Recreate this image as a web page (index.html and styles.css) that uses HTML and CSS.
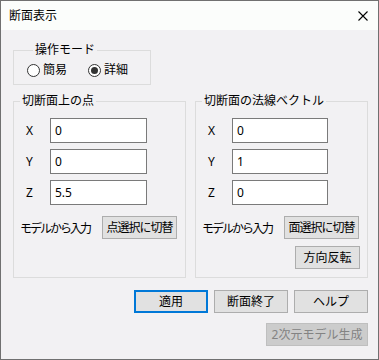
FILE: index.html
```html
<!DOCTYPE html>
<html lang="ja">
<head>
    <meta charset="UTF-8">
    <title>断面表示</title>
    <link rel="stylesheet" href="styles.css">
</head>
<body>
    <div class="window">
        <div class="titlebar">
            <span class="title">断面表示</span>
            <svg class="close" width="12" height="12" viewBox="0 0 12 12">
                <path d="M1.5 1.5 L10.5 10.5 M10.5 1.5 L1.5 10.5" stroke="#000" stroke-width="1.1" fill="none"/>
            </svg>
        </div>

        <div class="content">
            <fieldset class="mode">
                <legend>操作モード</legend>
                <div class="radio-row">
                    <label class="radio"><span class="dot"></span>簡易</label>
                    <label class="radio checked"><span class="dot"></span>詳細</label>
                </div>
            </fieldset>

            <div class="groups">
                <fieldset class="group">
                    <legend>切断面上の点</legend>
                    <div class="coord"><span class="axis">X</span><input type="text" value="0"></div>
                    <div class="coord"><span class="axis">Y</span><input type="text" value="0"></div>
                    <div class="coord"><span class="axis">Z</span><input type="text" value="5.5"></div>
                    <div class="model-row">
                        <span class="model-label">モデルから入力</span>
                        <button class="btn pick-btn">点選択に切替</button>
                    </div>
                </fieldset>

                <fieldset class="group">
                    <legend>切断面の法線ベクトル</legend>
                    <div class="coord"><span class="axis">X</span><input type="text" value="0"></div>
                    <div class="coord"><span class="axis">Y</span><input type="text" value="1"></div>
                    <div class="coord"><span class="axis">Z</span><input type="text" value="0"></div>
                    <div class="model-row">
                        <span class="model-label">モデルから入力</span>
                        <button class="btn pick-btn">面選択に切替</button>
                    </div>
                    <div class="flip-row">
                        <button class="btn flip-btn">方向反転</button>
                    </div>
                </fieldset>
            </div>

            <div class="actions">
                <button class="btn action focused">適用</button>
                <button class="btn action">断面終了</button>
                <button class="btn action">ヘルプ</button>
            </div>
            <div class="actions second">
                <button class="btn wide" disabled>2次元モデル生成</button>
            </div>
        </div>
    </div>
</body>
</html>
```

FILE: styles.css
```css
* {
    box-sizing: border-box;
}

body {
    margin: 0;
    background: #f2f1f3;
    font-family: "Noto Sans", "Noto Sans CJK JP", sans-serif;
    font-size: 12px;
    color: #000;
}

.window {
    width: 379px;
    height: 360px;
    border: 1px solid #707070;
    background: #f2f1f3;
}

.titlebar {
    height: 29px;
    background: #fbfdfb;
    display: flex;
    align-items: center;
    justify-content: space-between;
    padding: 0 9px 0 8px;
}

.title {
    font-size: 12px;
    line-height: 16px;
}

.close {
    display: block;
    margin-top: 1px;
}

.content {
    padding: 12px 10px 0 12px;
}

fieldset {
    margin: 0;
    padding: 0;
    border: 1px solid #dcdcdc;
    min-width: 0;
}

legend {
    margin-left: 6px;
    padding: 0 2px;
    line-height: 16px;
    font-size: 12px;
}

/* 操作モード */
.mode {
    width: 138px;
    padding: 4px 0 6px 13px;
}

.radio-row {
    display: flex;
    align-items: center;
    height: 16px;
}

.radio {
    display: flex;
    align-items: center;
    gap: 3px;
    line-height: 16px;
}

.radio + .radio {
    margin-left: 21px;
}

.dot {
    width: 13px;
    height: 13px;
    border: 1px solid #333;
    border-radius: 50%;
    background: #fff;
    display: flex;
    align-items: center;
    justify-content: center;
}

.radio.checked .dot::after {
    content: "";
    width: 7px;
    height: 7px;
    border-radius: 50%;
    background: #333;
}

/* 座標グループ */
.groups {
    display: flex;
    gap: 9px;
    margin-top: 8px;
}

.group {
    width: 173px;
    padding: 9px 0 8px 0;
}

.coord {
    display: flex;
    align-items: center;
    height: 25px;
    margin-bottom: 6px;
    padding-left: 12px;
}

.coord:nth-of-type(3) {
    margin-bottom: 11px;
}

.axis {
    width: 24px;
    line-height: 16px;
}

.coord input {
    width: 97px;
    height: 25px;
    border: 1px solid #7a7a7a;
    background: #fff;
    padding: 0 0 0 4px;
    font-family: inherit;
    font-size: 12px;
    color: #000;
    outline: none;
}

.group + .group .coord input {
    width: 96px;
}

.model-row {
    display: flex;
    align-items: center;
    padding-left: 6px;
}

.model-label {
    width: 82px;
    letter-spacing: -2px;
    white-space: nowrap;
}

.btn {
    height: 23px;
    padding: 0;
    border: 1px solid #adadad;
    background: #e1e1e1;
    font-family: inherit;
    font-size: 12px;
    color: #000;
    line-height: 16px;
}

.pick-btn {
    width: 75px;
    letter-spacing: -1px;
}

.flip-row {
    display: flex;
    justify-content: flex-end;
    padding-right: 7px;
    margin-top: 7px;
}

.flip-btn {
    width: 65px;
}

/* 下のボタン */
.actions {
    display: flex;
    justify-content: flex-end;
    gap: 6px;
    margin-top: 12px;
}

.actions.second {
    margin-top: 10px;
}

.action {
    width: 74px;
}

.action.focused {
    border: 2px solid #0078d7;
}

.wide {
    width: 102px;
}

.btn:disabled {
    background: #cccccc;
    border-color: #bfbfbf;
    color: #838383;
}
```
